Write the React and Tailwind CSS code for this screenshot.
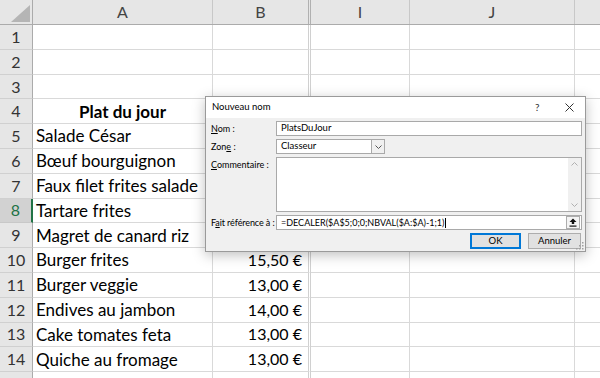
import React from "react";

const rows = [
    { a: "", b: "" },
    { a: "", b: "" },
    { a: "", b: "" },
    { a: "Plat du jour", b: "", bold: true },
    { a: "Salade César", b: "" },
    { a: "Bœuf bourguignon", b: "" },
    { a: "Faux filet frites salade", b: "" },
    { a: "Tartare frites", b: "" },
    { a: "Magret de canard riz", b: "" },
    { a: "Burger frites", b: "15,50 €" },
    { a: "Burger veggie", b: "13,00 €" },
    { a: "Endives au jambon", b: "14,00 €" },
    { a: "Cake tomates feta", b: "13,00 €" },
    { a: "Quiche au fromage", b: "13,00 €" },
    { a: "", b: "" },
];

function Sheet() {
    return (
        <div className="text-[17px] text-black" style={{ fontFamily: "Lato, 'Open Sans', sans-serif" }}>
            {/* column headers */}
            <div className="flex h-[25px] bg-[#e6e6e6] border-b border-[#ababab] text-[#444] text-[16px]">
                <div className="relative w-[33px] shrink-0 border-r border-[#ababab]">
                    <svg className="absolute right-[2px] bottom-[2px]" width="19" height="17" viewBox="0 0 19 17">
                        <polygon points="19,0 19,17 0,17" fill="#b5b5b5" />
                    </svg>
                </div>
                <div className="w-[180px] shrink-0 border-r border-[#c8c8c8] flex items-center justify-center">A</div>
                <div className="w-[98px] shrink-0 border-r-[3px] border-double border-[#b0b0b0] flex items-center justify-center">B</div>
                <div className="w-[99px] shrink-0 border-r border-[#c8c8c8] flex items-center justify-center">I</div>
                <div className="w-[165px] shrink-0 border-r border-[#c8c8c8] flex items-center justify-center">J</div>
                <div className="flex-1" />
            </div>
            {rows.map((r, i) => {
                const sel = i === 7;
                const last = i === rows.length - 1;
                return (
                    <div key={i} className="flex h-[24.8px]">
                        <div
                            className={
                                sel
                                    ? "w-[33px] shrink-0 bg-[#d2d2d2] text-[#217346] border-r-2 border-[#217346] border-b border-b-[#c8c8c8] flex items-center justify-center text-[16px]"
                                    : "w-[33px] shrink-0 bg-[#e6e6e6] text-[#333] border-r border-[#ababab] border-b border-b-[#d0d0d0] flex items-center justify-center text-[16px]"
                            }
                        >
                            {last ? "" : i + 1}
                        </div>
                        <div
                            className={
                                "w-[180px] shrink-0 border-r border-b border-[#d9d9d9] flex items-center whitespace-nowrap overflow-hidden " +
                                (r.bold ? "justify-center font-bold" : "pl-[3px]")
                            }
                        >
                            {r.a}
                        </div>
                        <div className="w-[98px] shrink-0 border-r-[3px] border-double border-r-[#d0d0d0] border-b border-b-[#d9d9d9] flex items-center justify-end pr-[6px] text-[16px]">
                            {r.b}
                        </div>
                        <div className="w-[99px] shrink-0 border-r border-b border-[#d9d9d9]" />
                        <div className="w-[165px] shrink-0 border-r border-b border-[#d9d9d9]" />
                        <div className="flex-1 border-b border-[#d9d9d9]" />
                    </div>
                );
            })}
        </div>
    );
}

function Dialog() {
    return (
        <div
            className="absolute left-[205px] top-[96px] w-[381px] h-[156px] border border-[#9a9a9a] bg-[#f0f0f0] shadow-[0_3px_12px_rgba(0,0,0,0.25)] text-[9px] text-black flex flex-col"
            style={{ fontFamily: "Lato, 'Noto Sans', sans-serif" }}
        >
            <div className="h-[21px] bg-white flex items-center pl-[6px] shrink-0 text-[9.5px]">
                <span className="flex-1">Nouveau nom</span>
                <span className="w-[10px] text-[10px] text-[#333] mr-[20px]">?</span>
                <svg className="mr-[11px]" width="9" height="9" viewBox="0 0 9 9">
                    <path d="M0.5 0.5 L8.5 8.5 M8.5 0.5 L0.5 8.5" stroke="#333" strokeWidth="1" />
                </svg>
            </div>
            <div className="flex flex-col pt-[3px] pr-[3px] gap-[3px]">
                <div className="flex items-center h-[15px]">
                    <div className="w-[70px] pl-[5px] shrink-0 whitespace-nowrap">
                        <u>N</u>om :
                    </div>
                    <div className="flex-1 h-full bg-white border border-[#a9a9a9] flex items-center pl-[4px] text-[9.5px]">PlatsDuJour</div>
                </div>
                <div className="flex items-center h-[15px]">
                    <div className="w-[70px] pl-[5px] shrink-0 whitespace-nowrap">
                        Zon<u>e</u> :
                    </div>
                    <div className="w-[109px] h-full bg-white border border-[#a9a9a9] flex items-center text-[9.5px]">
                        <span className="flex-1 pl-[4px]">Classeur</span>
                        <div className="w-[13px] h-full bg-[#f0f0f0] border-l border-[#a9a9a9] flex items-center justify-center">
                            <svg width="7" height="4" viewBox="0 0 7 4">
                                <path d="M0.5 0.5 L3.5 3.5 L6.5 0.5" fill="none" stroke="#555" strokeWidth="1" />
                            </svg>
                        </div>
                    </div>
                </div>
                <div className="flex h-[55px]">
                    <div className="w-[70px] pl-[5px] shrink-0 pt-[1px] whitespace-nowrap">
                        <u>C</u>ommentaire :
                    </div>
                    <div className="flex-1 h-full bg-white border border-[#a9a9a9] flex justify-end">
                        <div className="w-[13px] h-full bg-[#f0f0f0] flex flex-col items-center justify-between py-[4px]">
                            <svg width="7" height="4" viewBox="0 0 7 4">
                                <path d="M0.5 3.5 L3.5 0.5 L6.5 3.5" fill="none" stroke="#b0b0b0" strokeWidth="1" />
                            </svg>
                            <svg width="7" height="4" viewBox="0 0 7 4">
                                <path d="M0.5 0.5 L3.5 3.5 L6.5 0.5" fill="none" stroke="#b0b0b0" strokeWidth="1" />
                            </svg>
                        </div>
                    </div>
                </div>
                <div className="flex items-center h-[15px]">
                    <div className="w-[70px] pl-[5px] shrink-0 whitespace-nowrap tracking-[-0.1px]">
                        F<u>a</u>it référence à :
                    </div>
                    <div className="flex-1 h-full bg-white border border-[#a9a9a9] flex items-center">
                        <span className="flex-1 pl-[4px] whitespace-nowrap">
                            =DECALER($A$5;0;0;NBVAL($A:$A)-1;1)
                            <span className="inline-block w-px h-[10px] ml-[1px] bg-black align-middle" />
                        </span>
                        <div className="w-[14px] h-[13px] mr-[1px] border border-[#adadad] bg-[#f4f4f4] flex items-center justify-center">
                            <svg width="8" height="9" viewBox="0 0 8 9">
                                <path d="M4 0.5 L7.5 4 L5.2 4 L5.2 6 L2.8 6 L2.8 4 L0.5 4 Z" fill="#111" />
                                <rect x="0.5" y="7.5" width="7" height="1.2" fill="#111" />
                            </svg>
                        </div>
                    </div>
                </div>
                <div className="flex justify-end gap-[7px] h-[16px] pr-[1px] text-[9.5px]">
                    <div className="w-[51px] h-full bg-[#e1e1e1] border-2 border-[#0078d7] flex items-center justify-center">OK</div>
                    <div className="w-[53px] h-full bg-[#e1e1e1] border border-[#adadad] flex items-center justify-center">Annuler</div>
                </div>
            </div>
            <svg className="absolute right-[1px] bottom-[1px]" width="8" height="8" viewBox="0 0 8 8">
                <rect x="6" y="0" width="1.5" height="1.5" fill="#a0a0a0" />
                <rect x="3" y="3" width="1.5" height="1.5" fill="#a0a0a0" />
                <rect x="6" y="3" width="1.5" height="1.5" fill="#a0a0a0" />
                <rect x="0" y="6" width="1.5" height="1.5" fill="#a0a0a0" />
                <rect x="3" y="6" width="1.5" height="1.5" fill="#a0a0a0" />
                <rect x="6" y="6" width="1.5" height="1.5" fill="#a0a0a0" />
            </svg>
        </div>
    );
}

export default function App() {
    return (
        <div className="relative w-[600px] h-[378px] overflow-hidden bg-white">
            <Sheet />
            <Dialog />
        </div>
    );
}
